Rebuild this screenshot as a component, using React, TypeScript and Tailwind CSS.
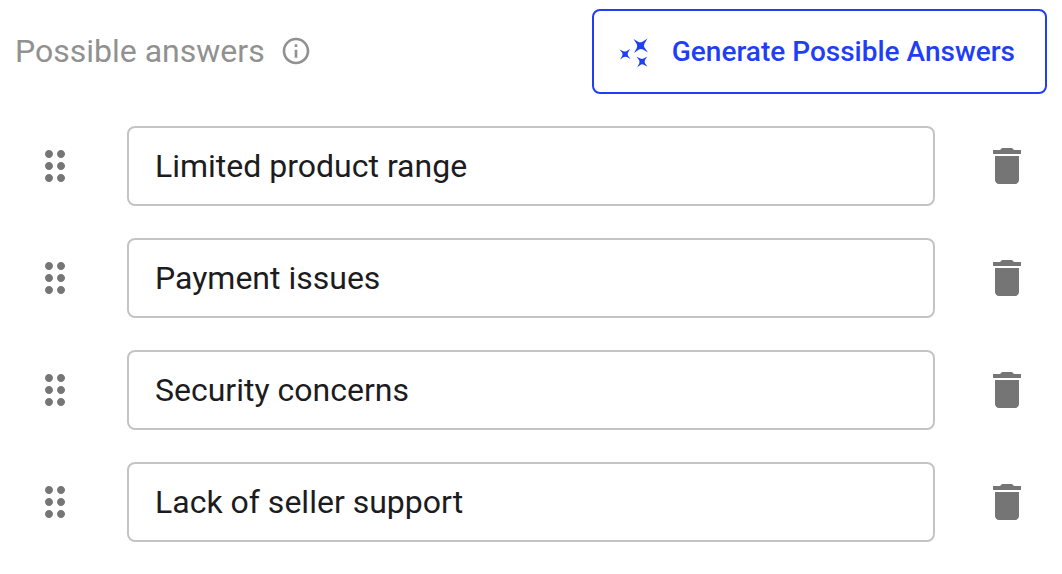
import { useState } from 'react';
import { MdDelete, MdDragIndicator, MdOutlineInfo } from 'react-icons/md';

const initialAnswers = [
    'Limited product range',
    'Payment issues',
    'Security concerns',
    'Lack of seller support',
];

function SparklesIcon() {
    return (
        <svg
            className="h-8 w-8 shrink-0"
            viewBox="0 0 32 32"
            fill="currentColor"
            aria-hidden="true"
        >
            <path d="M15.500 3L20.500 6Q22.500 6.700 24.500 5.700L29.500 2.500L26.500 7.500Q25.500 9.500 26.500 11.500L30 16.500L25 13.500Q23 12.300 21 13.500L16 17L18.800 12Q19.700 10 18.700 8Z" />
            <path d="M1.500 13.500L5.300 15.300Q7 16 8.700 15L12.200 13L10 16.500Q9.300 18.200 10 19.800L12.500 23L8.800 21Q7 20.200 5.300 21.200L2.200 23.500L4.200 19.800Q4.800 18.300 4.200 16.800Z" />
            <path d="M18.500 20.800L22.300 22.600Q24 23.300 25.700 22.500L29.200 20.500L27 24Q26.300 25.700 27 27.300L29.500 30.800L25.800 28.700Q24 27.900 22.300 28.900L19.200 31.200L21.200 27.500Q21.800 25.900 21.200 24.300Z" />
        </svg>
    );
}

interface AnswerRowProps {
    index: number;
    value: string;
    onChange: (value: string) => void;
    onRemove: () => void;
}

function AnswerRow({ index, value, onChange, onRemove }: AnswerRowProps) {
    return (
        <li className="flex items-center gap-12">
            <button
                type="button"
                aria-label={`Reorder answer ${index + 1}`}
                className="shrink-0 cursor-grab text-[#757575]"
            >
                <MdDragIndicator className="h-12 w-12" />
            </button>
            <input
                type="text"
                aria-label={`Answer ${index + 1}`}
                value={value}
                onChange={(e) => onChange(e.target.value)}
                className="h-20 min-w-0 flex-1 rounded-lg border-2 border-[#c4c4c4] bg-white px-[26px] text-[32px] text-[#1c1c1e] outline-none focus:border-[#1f3ff5]"
            />
            <button
                type="button"
                aria-label={`Delete answer ${index + 1}`}
                onClick={onRemove}
                className="shrink-0 text-[#757575]"
            >
                <MdDelete className="h-12 w-12" />
            </button>
        </li>
    );
}

export default function App() {
    const [answers, setAnswers] = useState(initialAnswers);

    return (
        <section className="bg-white px-[15px] pt-[9px] pb-8 font-['Roboto',sans-serif]">
            <div className="flex items-center justify-between">
                <div className="flex items-center gap-[15px] pb-0.5 text-[#919191]">
                    <h2 className="text-[32px] leading-10">Possible answers</h2>
                    <MdOutlineInfo className="h-8 w-8" />
                </div>
                <button
                    type="button"
                    className="flex h-[85px] items-center gap-[22px] rounded-lg border-2 border-[#1f3ff5] pr-[30px] pl-6 text-[28px] font-medium text-[#1f3ff5]"
                >
                    <SparklesIcon />
                    Generate Possible Answers
                </button>
            </div>

            <ul className="mt-8 flex flex-col gap-8 px-4">
                {answers.map((answer, i) => (
                    <AnswerRow
                        key={i}
                        index={i}
                        value={answer}
                        onChange={(value) =>
                            setAnswers(answers.map((a, j) => (j === i ? value : a)))
                        }
                        onRemove={() =>
                            setAnswers(answers.filter((_, j) => j !== i))
                        }
                    />
                ))}
            </ul>
        </section>
    );
}
